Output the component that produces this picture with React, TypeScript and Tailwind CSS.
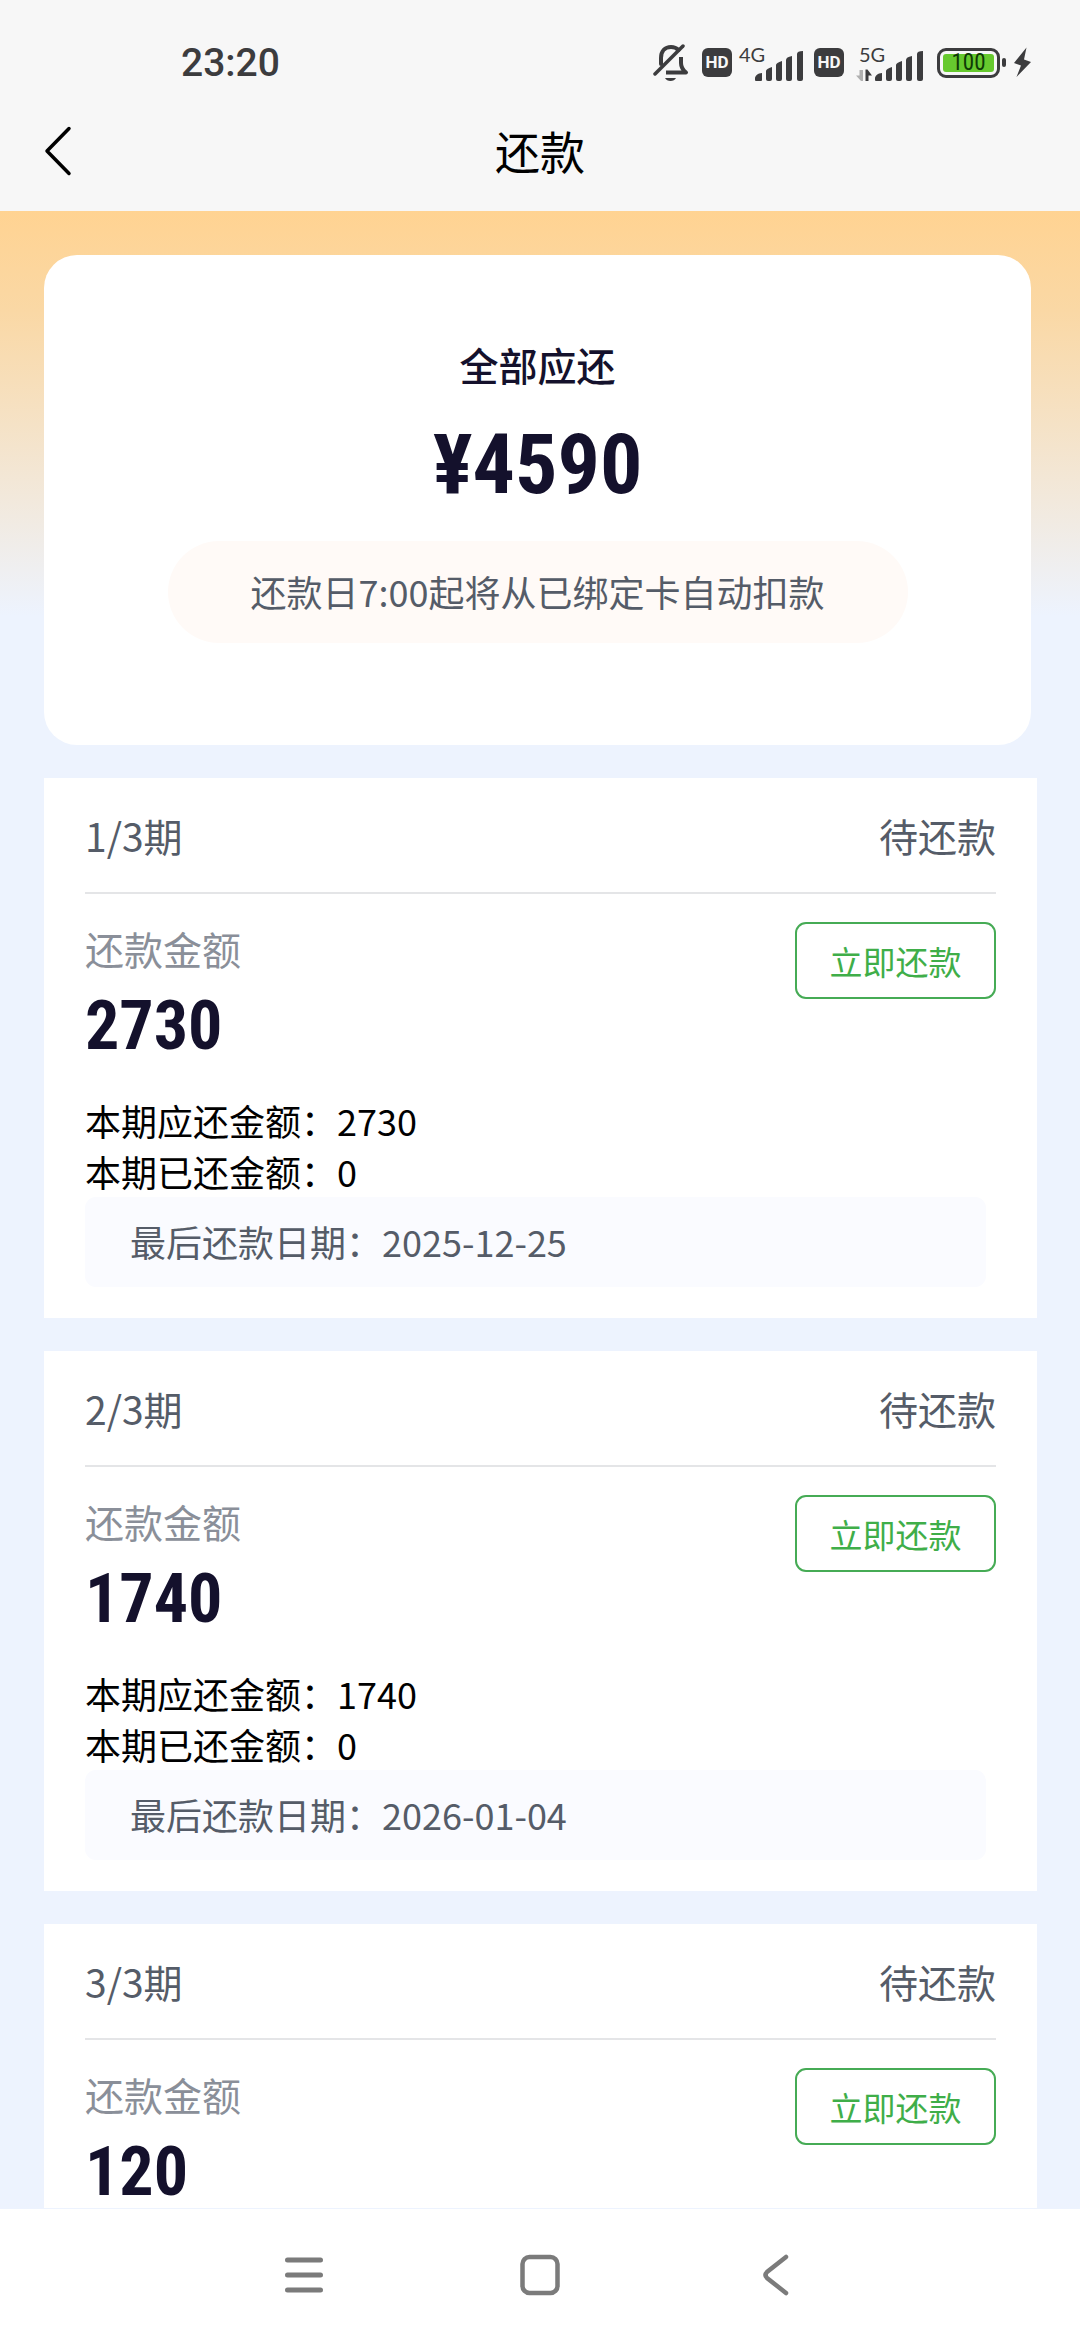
import type { ReactNode } from "react";

type Item = {
  term: string;
  status: string;
  amount: string;
  detail?: { paid: string; due: string };
};

const installments: Item[] = [
  { term: "1/3期", status: "待还款", amount: "2730", detail: { paid: "0", due: "2025-12-25" } },
  { term: "2/3期", status: "待还款", amount: "1740", detail: { paid: "0", due: "2026-01-04" } },
  { term: "3/3期", status: "待还款", amount: "120" },
];

function MutedBell() {
  return (
    <svg className="h-[38px] w-[36px]" viewBox="0 0 36 38" fill="none" stroke="#3c3c3e" strokeWidth="4">
      <path d="M8 20V14C8 7 12 3 18 3C21 3 23.500 4 25.500 6" strokeLinecap="round" />
      <path d="M28 13V19C28 23 30 26 33 28.500H13" strokeLinejoin="round" />
      <path d="M2 30L30 2" strokeLinecap="round" strokeWidth="3.500" />
      <path d="M12 34H23C22 36 20 37 17.500 37C15 37 13 36 12 34Z" fill="#3c3c3e" stroke="none" />
    </svg>
  );
}

function HdBadge() {
  return (
    <span className="flex h-[29px] w-[30px] items-center justify-center rounded-[6px] bg-[#3c3c3e] font-['Roboto',sans-serif] text-[17px] leading-none font-bold text-[#f7f7f7]">
      HD
    </span>
  );
}

function Signal({ label, children }: { label: string; children?: ReactNode }) {
  return (
    <span className="relative block h-[38px] w-[64px]">
      <span className="absolute top-0 left-0 font-['Lato',sans-serif] text-[20px] leading-[20px] text-[#3c3c3e]">
        {label}
      </span>
      <svg className="block h-[38px] w-[64px] overflow-visible" viewBox="0 0 64 38" fill="#3c3c3e">
        <path d="M16 36V34C16 32 19 29 23 29V36Q23 37 22 37H17Q16 37 16 36Z" />
        <path d="M27 27Q27 25 33 23V35Q33 37 31 37H29Q27 37 27 35Z" />
        <path d="M37 21Q37 19 43 17V35Q43 37 41 37H39Q37 37 37 35Z" />
        <path d="M47 16Q47 13 53 12V35Q53 37 51 37H49Q47 37 47 35Z" />
        <path d="M58 10Q58 7 64 7V35Q64 37 62 37H60Q58 37 58 35Z" />
        {children}
      </svg>
    </span>
  );
}

function Battery() {
  return (
    <span className="flex items-center gap-[2px]">
      <span className="flex h-[30px] w-[63px] items-center justify-center rounded-[9px] border-[3px] border-[#3c3c3e] p-[3px]">
        <span className="flex h-full w-full items-center justify-center rounded-[3px] bg-[#66c92e] font-['Roboto_Condensed','Roboto',sans-serif] text-[23px] leading-none text-[#0f3a06]">
          100
        </span>
      </span>
      <span className="h-[9px] w-[4px] rounded-[2px] bg-[#3c3c3e]" />
    </span>
  );
}

function StatusBar() {
  return (
    <div className="flex h-[93px] items-center justify-between pt-[32px] pr-[48px] pl-[181px]">
      <span className="font-['Roboto',sans-serif] text-[39px] leading-[46px] font-medium text-[#3c3c3e]">23:20</span>
      <div className="flex items-center">
        <MutedBell />
        <span className="ml-[13px]"><HdBadge /></span>
        <span className="ml-[7px]"><Signal label="4G" /></span>
        <span className="ml-[11px]"><HdBadge /></span>
        <span className="ml-[15px]">
          <Signal label="5G">
            <path d="M4 26V37H2L-3 31.500H0.500V26Z" fill="#b0b0b0" />
            <path d="M6.500 37V25.500H8.500L13 31.500H9.500V37Z" />
          </Signal>
        </span>
        <span className="ml-[14px]"><Battery /></span>
        <svg className="ml-[7px] h-[31px] w-[19px]" viewBox="0 0 19 31" fill="#3c3c3e">
          <path d="M13.500 0.500L1 16L8 18.500L3.500 30L18 15L11 12.500Z" />
        </svg>
      </div>
    </div>
  );
}

function TitleBar() {
  return (
    <div className="grid h-[118px] grid-cols-[1fr_auto_1fr] items-center px-[40px] pb-[3px]">
      <button type="button" aria-label="返回" className="w-[40px]">
        <svg className="h-[50px] w-[36px]" viewBox="0 0 36 50" fill="none" stroke="#000" strokeWidth="3.500" strokeLinecap="round" strokeLinejoin="round">
          <path d="M29 2.500L7 25L29 47.500" />
        </svg>
      </button>
      <h1 className="text-[45px] leading-[64px] text-black">还款</h1>
    </div>
  );
}

function Summary() {
  return (
    <section className="mr-[5px] flex flex-col items-center rounded-[33px] bg-white px-[40px] pt-[81px] pb-[102px]">
      <h2 className="text-[39px] leading-[56px] font-medium text-[#14112c]">全部应还</h2>
      <p className="mt-[22px] font-['Roboto_Condensed',sans-serif] text-[84px] leading-[102px] font-bold text-[#14112c]">
        ¥4590
      </p>
      <p className="mt-[25px] w-full max-w-[740px] rounded-full bg-[#fffaf7] pt-[24px] pb-[26px] text-center text-[36px] leading-[52px] text-[#555c68]">
        还款日7:00起将从已绑定卡自动扣款
      </p>
    </section>
  );
}

function Installment({ item }: { item: Item }) {
  return (
    <li className="bg-white px-[41px]">
      <div className="flex h-[116px] items-center justify-between border-b-2 border-[#e4e5e7] text-[39px] leading-[56px] text-[#555c68]">
        <span>{item.term}</span>
        <span>{item.status}</span>
      </div>
      <div className="flex items-start justify-between pt-[28px]">
        <div>
          <p className="text-[39px] leading-[52px] text-[#8a8f99]">还款金额</p>
          <p className="mt-[16px] font-['Roboto_Condensed',sans-serif] text-[68px] leading-[72px] font-bold text-[#14112c]">
            {item.amount}
          </p>
        </div>
        <button type="button" className="h-[77px] w-[201px] rounded-[11px] border-2 border-[#46ab55] text-[33px] leading-[48px] text-[#3fae49]">
          立即还款
        </button>
      </div>
      {item.detail && (
        <div className="pt-[33px] pb-[31px]">
          <div className="text-[36px] leading-[51px] text-black">
            <p>本期应还金额：{item.amount}</p>
            <p>本期已还金额：{item.detail.paid}</p>
          </div>
          <p className="mr-[10px] rounded-[11px] bg-[#fafbff] px-[45px] pt-[19px] pb-[20px] text-[36px] leading-[51px] text-[#555c68]">
            最后还款日期：{item.detail.due}
          </p>
        </div>
      )}
    </li>
  );
}

function NavBar() {
  return (
    <nav className="flex h-[131px] shrink-0 items-center justify-center gap-[196px] bg-white">
      <button type="button" aria-label="最近任务">
        <svg className="block h-[42px] w-[40px]" viewBox="0 0 40 42" stroke="#7b7b7b" strokeWidth="5" strokeLinecap="round">
          <path d="M3.500 6H36.500M3.500 21H36.500M3.500 36H36.500" />
        </svg>
      </button>
      <button type="button" aria-label="主屏幕">
        <svg className="block h-[42px] w-[40px]" viewBox="0 0 40 42" fill="none" stroke="#7b7b7b" strokeWidth="4.500">
          <rect x="2.500" y="3" width="35" height="36" rx="7" />
        </svg>
      </button>
      <button type="button" aria-label="后退">
        <svg className="block h-[42px] w-[40px]" viewBox="0 0 40 42" fill="none" stroke="#7b7b7b" strokeWidth="4.500" strokeLinecap="round">
          <path d="M30 3L11 18Q8 21 11 24L30 39" />
        </svg>
      </button>
    </nav>
  );
}

export default function App() {
  return (
    <div className="flex min-h-screen flex-col bg-[#edf3fe] font-['Noto_Sans_CJK_SC',sans-serif]">
      <header className="shrink-0 bg-[#f7f7f7]">
        <StatusBar />
        <TitleBar />
      </header>
      <main className="flex-1 bg-[linear-gradient(180deg,#ffd392_0px,#fad8a5_100px,#edf3fe_405px)] px-[44px] pt-[44px]">
        <Summary />
        <ul className="mt-[33px] mr-[-1px] flex flex-col gap-[33px]">
          {installments.map((item) => (
            <Installment key={item.term} item={item} />
          ))}
        </ul>
      </main>
      <NavBar />
    </div>
  );
}
